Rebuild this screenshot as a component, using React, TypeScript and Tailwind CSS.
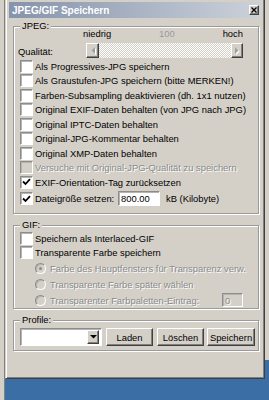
import React from "react";

const sunken =
  "border border-t-[#8c8c8c] border-l-[#8c8c8c] border-r-white border-b-white shadow-[inset_1px_1px_0_#b4b4b4]";
const raised =
  "border border-t-white border-l-white border-r-[#404040] border-b-[#404040] shadow-[inset_-1px_-1px_0_#808080]";
const dimText = "text-[#8a8a8a] [text-shadow:1px_1px_0_#fff]";

function CheckMark() {
  return (
    <svg width="9" height="8" viewBox="0 0 9 8">
      <polyline points="1,3.5 3.5,6 8,1.2" fill="none" stroke="#000" strokeWidth="1.8" />
    </svg>
  );
}

function Check({ label, checked, disabled }: { label: string; checked?: boolean; disabled?: boolean }) {
  return (
    <div className="flex h-[14.5px] items-center pl-[6px]">
      <div
        className={`flex h-[13px] w-[13px] shrink-0 items-center justify-center ${sunken} ${
          disabled ? "bg-[#d4d0c8]" : "bg-white"
        }`}
      >
        {checked && <CheckMark />}
      </div>
      <span className={`ml-[2px] whitespace-nowrap ${disabled ? dimText : ""}`}>{label}</span>
    </div>
  );
}

function Radio({ label, selected, children }: { label: string; selected?: boolean; children?: React.ReactNode }) {
  return (
    <div className="flex h-[16px] items-center pl-[21px]">
      <div className="flex h-[11px] w-[11px] shrink-0 items-center justify-center rounded-full border border-t-[#8c8c8c] border-l-[#8c8c8c] border-r-white border-b-white bg-[#d4d0c8] shadow-[inset_1px_1px_0_#b4b4b4]">
        {selected && <div className="h-[3px] w-[3px] rounded-full bg-[#8a8a8a]" />}
      </div>
      <span className={`ml-[4px] whitespace-nowrap ${dimText}`}>{label}</span>
      {children}
    </div>
  );
}

function Group({ title, className, children }: { title: string; className: string; children: React.ReactNode }) {
  return (
    <div
      className={`relative ml-[4px] w-[246px] border border-[#9a9a9a] shadow-[1px_1px_0_#fff,inset_1px_1px_0_#fff] ${className}`}
    >
      <span className="absolute -top-[8px] left-[6px] bg-[#d4d0c8] px-[2px] leading-[14px]">{title}</span>
      {children}
    </div>
  );
}

function Arrow({ dir, dim }: { dir: "left" | "right" | "down"; dim?: boolean }) {
  const pts = dir === "left" ? "4,0 4,7 0.5,3.5" : dir === "right" ? "0,0 0,7 3.5,3.5" : "0,0 7,0 3.5,3.5";
  const box = dir === "down" ? "0 0 7 4" : "0 0 4 7";
  const w = dir === "down" ? 7 : 4;
  const h = dir === "down" ? 4 : 7;
  return (
    <svg width={w} height={h} viewBox={box} className={dim ? "drop-shadow-[1px_1px_0_#fff]" : ""}>
      <polygon points={pts} fill={dim ? "#a0a0a0" : "#000"} />
    </svg>
  );
}

export default function App() {
  return (
    <div className="flex h-[400px] w-[269px] overflow-hidden bg-[#3a6ea5] font-['Liberation_Sans',Arial,sans-serif] text-[9.4px] leading-[13px] text-black">
      <div className="h-full w-[5px] shrink-0 border-r border-[#808080] bg-[#d4d0c8]" />

      <div className="-mt-[2px] flex h-[381px] w-[260px] shrink-0 flex-col border border-t-[#d4d0c8] border-l-[#d4d0c8] border-r-[#404040] border-b-[#404040] bg-[#d4d0c8] p-[3px] shadow-[inset_1px_1px_0_#fff,inset_-1px_-1px_0_#808080]">
        <div className="flex h-[16px] items-center justify-between bg-gradient-to-r from-[#8593ab] to-[#ccd2da] pl-[3px] pr-[2px]">
          <span className="text-[10px] font-bold text-white">JPEG/GIF Speichern</span>
          <div className={`flex h-[10px] w-[10px] items-center justify-center bg-[#d4d0c8] ${raised}`}>
            <svg width="6" height="6" viewBox="0 0 6 6">
              <path d="M0.5 0.5 L5.5 5.5 M5.5 0.5 L0.5 5.5" stroke="#000" strokeWidth="1.3" />
            </svg>
          </div>
        </div>

        <Group title="JPEG:" className="mt-[8px] h-[188px]">
          <div className="ml-[69px] mt-[1px] flex h-[11px] w-[160px] items-center justify-between">
            <span>niedrig</span>
            <span className="text-[#9a9a9a]">100</span>
            <span>hoch</span>
          </div>
          <div className="mt-[4px] flex h-[15px] items-center">
            <span className="w-[72px] pl-[4px] pt-[2px]">Qualität:</span>
            <div className="flex h-[15px] w-[157px]">
              <div className={`flex h-[15px] w-[13px] items-center justify-center bg-[#d4d0c8] ${raised}`}>
                <Arrow dir="left" dim />
              </div>
              <div className="flex-1 bg-[repeating-conic-gradient(#d4d0c8_0_25%,#fff_0_50%)] bg-[length:2px_2px]" />
              <div className={`flex h-[15px] w-[12px] items-center justify-center bg-[#d4d0c8] ${raised}`}>
                <Arrow dir="right" dim />
              </div>
            </div>
          </div>
          <div className="mt-[0.75px]">
            <Check label="Als Progressives-JPG speichern" />
            <Check label="Als Graustufen-JPG speichern (bitte MERKEN!)" />
            <Check label="Farben-Subsampling deaktivieren (dh. 1x1 nutzen)" />
            <Check label="Original EXIF-Daten behalten (von JPG nach JPG)" />
            <Check label="Original IPTC-Daten behalten" />
            <Check label="Original-JPG-Kommentar behalten" />
            <Check label="Original XMP-Daten behalten" />
            <Check label="Versuche mit Original-JPG-Qualität zu speichern" disabled />
            <Check label="EXIF-Orientation-Tag zurücksetzen" checked />
          </div>
          <div className="flex h-[19px] items-center pl-[6px]">
            <div className={`flex h-[13px] w-[13px] shrink-0 items-center justify-center bg-white ${sunken}`}>
              <CheckMark />
            </div>
            <span className="ml-[2px] w-[83px] whitespace-nowrap">Dateigröße setzen:</span>
            <div className={`flex h-[15px] w-[42px] items-center bg-white pl-[2px] ${sunken}`}>800.00</div>
            <span className="ml-[6px]">kB (Kilobyte)</span>
          </div>
        </Group>

        <Group title="GIF:" className="mt-[11px] h-[84px]">
          <div className="pt-[5px]">
            <Check label="Speichern als Interlaced-GIF" />
            <Check label="Transparente Farbe speichern" />
          </div>
          <Radio label="Farbe des Hauptfensters für Transparenz verw." selected />
          <Radio label="Transparente Farbe später wählen" />
          <Radio label="Transparenter Farbpaletten-Eintrag:">
            <div className={`ml-auto mr-[15px] flex h-[14px] w-[21px] items-center bg-[#d4d0c8] pl-[2px] ${sunken} ${dimText}`}>
              0
            </div>
          </Radio>
        </Group>

        <Group title="Profile:" className="mt-[11px] h-[31px]">
          <div className="ml-[6px] mt-[7px] flex h-[18px] items-center">
            <div className={`flex h-[18px] w-[82px] items-center justify-end bg-white p-[2px] ${sunken}`}>
              <div className={`flex h-[14px] w-[12px] items-center justify-center bg-[#d4d0c8] ${raised}`}>
                <Arrow dir="down" />
              </div>
            </div>
            <button className={`ml-[4px] h-[18px] w-[47px] bg-[#d4d0c8] ${raised}`}>Laden</button>
            <button className={`ml-[4px] h-[18px] w-[47px] bg-[#d4d0c8] ${raised}`}>Löschen</button>
            <button className={`ml-[3px] h-[18px] w-[48px] bg-[#d4d0c8] ${raised}`}>Speichern</button>
          </div>
        </Group>
      </div>

      <div className="h-[360px] w-[4px] shrink-0 bg-[#d4d0c8]" />
    </div>
  );
}
